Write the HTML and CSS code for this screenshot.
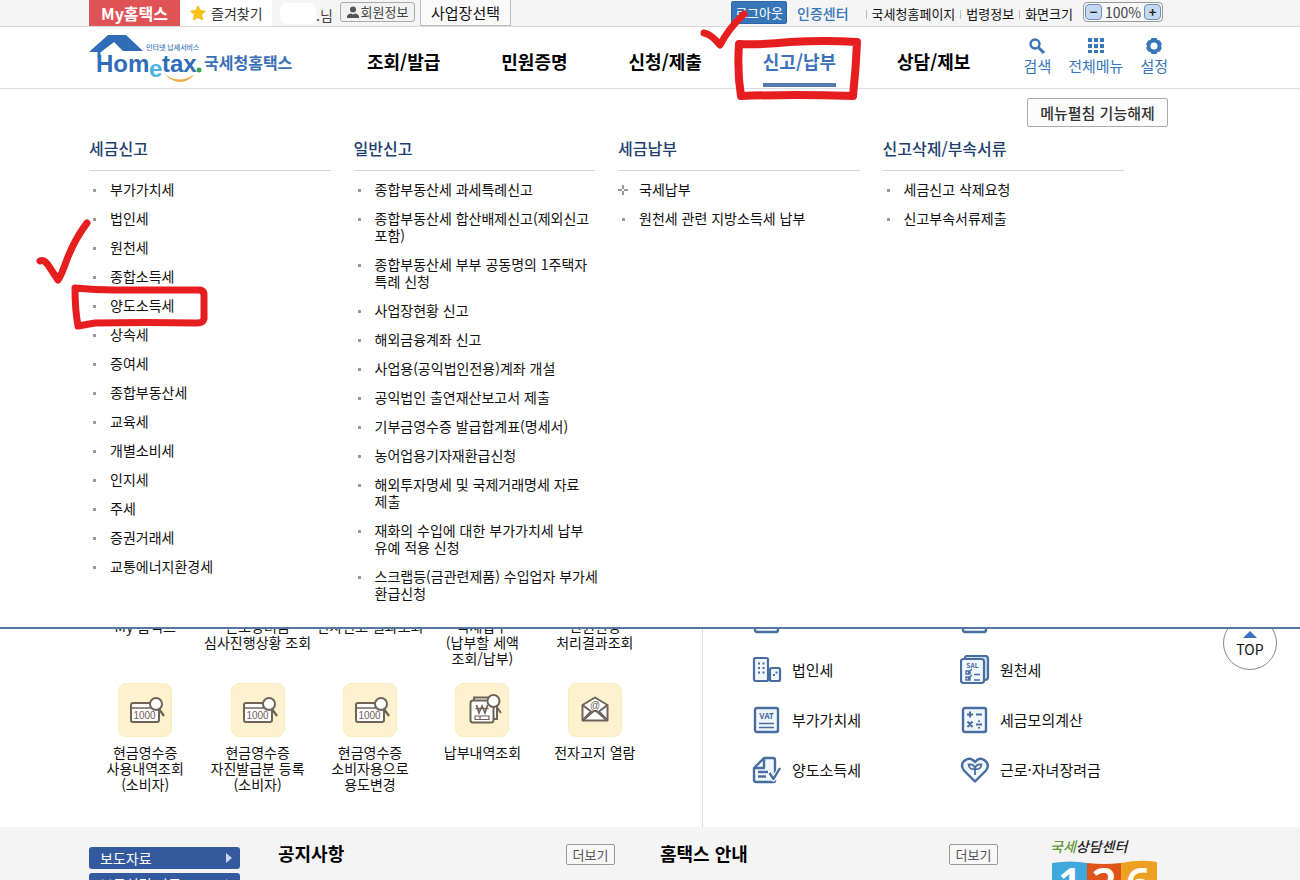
FILE: index.html
```html
<!DOCTYPE html>
<html lang="ko">
<head>
<meta charset="utf-8">
<title>국세청 홈택스</title>
<link rel="stylesheet" href="styles.css">
</head>
<body>
<svg class="defs" aria-hidden="true">
  <symbol id="receipt" viewBox="0 0 54 54">
    <rect x="13" y="20" width="28" height="19" rx="2" fill="#fff" stroke="#6f6259" stroke-width="2"/>
    <path d="M13 25H40" stroke="#6f6259" stroke-width="1.5"/>
    <text x="26.5" y="36" text-anchor="middle" class="icon-won">1000</text>
    <path d="M41 26L46 33" stroke="#6f6259" stroke-width="2.2"/>
    <circle cx="38" cy="21" r="6" fill="#fff" stroke="#6f6259" stroke-width="2"/>
  </symbol>
  <symbol id="doc" viewBox="0 0 30 30">
    <rect x="3" y="3" width="23" height="24" rx="2" fill="#f2f7fd" stroke="#486d9f" stroke-width="2.4"/>
    <path d="M7 18.5H22M7 22.5H22" stroke="#486d9f" stroke-width="1.6"/>
  </symbol>
</svg>
<div class="page">
  <div class="topbar">
    <div class="wrap topbar-row">
      <a href="#" class="my-tab">My홈택스</a>
      <a href="#" class="fav-tab"><svg width="16" height="16" viewBox="0 0 16 16"><path d="M8 1L10.2 5.6L15.3 6.2L11.5 9.7L12.5 14.8L8 12.3L3.5 14.8L4.5 9.7L.7 6.2L5.8 5.6Z" fill="#fcc419" stroke="#f5b40c"/></svg>즐겨찾기</a>
      <span class="user"><span class="user-name"></span>.님</span>
      <button class="info-btn"><svg width="12" height="12" viewBox="0 0 12 12"><circle cx="6" cy="3.5" r="3" fill="#555"/><path d="M0 12V10Q1 7.5 4 7.5L6 8.5L8 7.5Q11 7.5 12 10V12Z" fill="#555"/></svg>회원정보</button>
      <button class="biz-btn">사업장선택</button>
      <div class="top-right">
        <button class="logout">로그아웃</button>
        <a href="#" class="cert">인증센터</a>
        <div class="links"><a href="#">국세청홈페이지</a><a href="#">법령정보</a><span>화면크기</span></div>
        <div class="zoom"><button aria-label="축소">−</button><span>100%</span><button aria-label="확대">+</button></div>
      </div>
    </div>
  </div>

  <header class="header">
    <div class="wrap header-row">
      <a href="#" class="logo" aria-label="Hometax 국세청홈택스">
        <svg width="204" height="52" viewBox="0 0 204 52">
          <path d="M0 19L19 2H37L54 18H34L25 9L12 19Z" fill="#2f6db8"/>
          <path d="M10 17V24" stroke="#2f6db8" stroke-width="3"/>
          <text x="7" y="39" class="lg-main">Hom</text>
          <text x="60" y="44" class="lg-e">e</text>
          <text x="73" y="39" class="lg-main">tax</text>
          <circle cx="110" cy="37" r="2.5" fill="#39a548"/>
          <path d="M75 41Q91 52 106 41Q92 57 75 41Z" fill="#f0a83b"/>
          <text x="57" y="17" class="lg-small">인터넷 납세서비스</text>
          <text x="115" y="36" class="lg-kr">국세청홈택스</text>
        </svg>
      </a>
      <nav class="nav">
        <a href="#">조회/발급</a><a href="#">민원증명</a><a href="#">신청/제출</a><a href="#" class="active">신고/납부</a><a href="#">상담/제보</a>
      </nav>
      <div class="tools">
        <a href="#"><svg width="18" height="18" viewBox="0 0 18 18" fill="none" stroke="#3876bb"><circle cx="7" cy="7" r="4.5" stroke-width="2.4"/><path d="M10.5 10.5L16 16" stroke-width="3"/></svg>검색</a>
        <a href="#"><svg width="18" height="18" viewBox="0 0 18 18" fill="#3876bb"><path d="M1 1h4v4H1zM7 1h4v4H7zM13 1h4v4h-4zM1 7h4v4H1zM7 7h4v4H7zM13 7h4v4h-4zM1 13h4v3H1zM7 13h4v3H7zM13 13h4v3h-4z"/></svg>전체메뉴</a>
        <a href="#"><svg width="18" height="18" viewBox="0 0 18 18"><path d="M6.5 1h5l1 2 2.400.4 2 3.800-1 1.800 1 2-2 3.600-2.400.4-1 2h-5l-1-2-2.400-.4-2-3.600 1-2-1-1.800 2-3.800 2.400-.4z" fill="#3876bb"/><circle cx="9" cy="9" r="3.500" fill="#fff"/></svg>설정</a>
      </div>
    </div>
  </header>

  <div class="stage">
    <section class="mega">
      <div class="wrap">
        <div class="mega-top"><button class="toggle">메뉴펼침 기능해제</button></div>
        <div class="mega-cols">
          <div><h2>세금신고</h2>
            <ul><li><a href="#">부가가치세</a></li><li><a href="#">법인세</a></li><li><a href="#">원천세</a></li><li><a href="#">종합소득세</a></li><li><a href="#">양도소득세</a></li><li><a href="#">상속세</a></li><li><a href="#">증여세</a></li><li><a href="#">종합부동산세</a></li><li><a href="#">교육세</a></li><li><a href="#">개별소비세</a></li><li><a href="#">인지세</a></li><li><a href="#">주세</a></li><li><a href="#">증권거래세</a></li><li><a href="#">교통에너지환경세</a></li></ul></div>
          <div><h2>일반신고</h2>
            <ul><li><a href="#">종합부동산세 과세특례신고</a></li><li><a href="#">종합부동산세 합산배제신고(제외신고<br>포함)</a></li><li><a href="#">종합부동산세 부부 공동명의 1주택자<br>특례 신청</a></li><li><a href="#">사업장현황 신고</a></li><li><a href="#">해외금융계좌 신고</a></li><li><a href="#">사업용(공익법인전용)계좌 개설</a></li><li><a href="#">공익법인 출연재산보고서 제출</a></li><li><a href="#">기부금영수증 발급합계표(명세서)</a></li><li><a href="#">농어업용기자재환급신청</a></li><li><a href="#">해외투자명세 및 국제거래명세 자료<br>제출</a></li><li><a href="#">재화의 수입에 대한 부가가치세 납부<br>유예 적용 신청</a></li><li><a href="#">스크랩등(금관련제품) 수입업자 부가세<br>환급신청</a></li></ul></div>
          <div><h2>세금납부</h2>
            <ul><li class="plus"><a href="#">국세납부</a></li><li><a href="#">원천세 관련 지방소득세 납부</a></li></ul></div>
          <div><h2>신고삭제/부속서류</h2>
            <ul><li><a href="#">세금신고 삭제요청</a></li><li><a href="#">신고부속서류제출</a></li></ul></div>
        </div>
      </div>
    </section>

    <main class="wrap main">
      <div class="quick">
        <a href="#"><span class="tile"></span>My 홈택스</a>
        <a href="#"><span class="tile"></span>근로장려금<br>심사진행상황 조회</a>
        <a href="#"><span class="tile"></span>전자신고 결과조회</a>
        <a href="#"><span class="tile"></span>국세납부<br>(납부할 세액<br>조회/납부)</a>
        <a href="#"><span class="tile"></span>민원신청<br>처리결과조회</a>
        <a href="#"><span class="tile"><svg><use href="#receipt"/></svg></span>현금영수증<br>사용내역조회<br>(소비자)</a>
        <a href="#"><span class="tile"><svg><use href="#receipt"/></svg></span>현금영수증<br>자진발급분 등록<br>(소비자)</a>
        <a href="#"><span class="tile"><svg><use href="#receipt"/></svg></span>현금영수증<br>소비자용으로<br>용도변경</a>
        <a href="#"><span class="tile"><svg viewBox="0 0 54 54" fill="#fff" stroke="#6f6259" stroke-width="2"><path d="M19 17V14.5H38Q42 14.5 42 18V36H38"/><rect x="15.5" y="17.5" width="23" height="22" rx="2.5"/><path d="M21.500 22L24 30L27 23L30 30L32.500 22M20.500 25.500H33.500" fill="none" stroke-width="1.6"/><path d="M20 33H34V36.500H20ZM25 33V36.500" stroke-width="1.2"/><path d="M41 23L46 30"/><circle cx="38.5" cy="18" r="6"/></svg></span>납부내역조회</a>
        <a href="#"><span class="tile"><svg viewBox="0 0 54 54" fill="#fff" stroke="#6f6259" stroke-width="2" stroke-linejoin="round"><path d="M14.5 22L27 14.5L39.5 22V37.5H14.5Z"/><path d="M14.5 22L23 28.5L14.5 37.5M39.5 22L31 28.5L39.5 37.5M15 37.5L24.5 29Q27 27 29.5 29L39 37.5" fill="none"/><text x="27" y="26" text-anchor="middle" class="icon-won icon-at">@</text></svg></span>전자고지 열람</a>
      </div>
      <div class="taxes">
        <a href="#"><svg><use href="#doc"/></svg>종합소득세</a>
        <a href="#"><svg><use href="#doc"/></svg>연말정산</a>
        <a href="#"><svg viewBox="0 0 30 30" fill="#f2f7fd" stroke="#486d9f" stroke-width="2.2"><rect x="2" y="3" width="14" height="23" rx="1.5"/><rect x="18" y="13" width="10" height="13" rx="1.5"/><path d="M6 8.5H8M10.5 8.5H12.5M6 13H8M10.5 13H12.5M6 17.5H8M10.5 17.5H12.5M21 20H23M23.5 17.5H25.5"/></svg>법인세</a>
        <a href="#"><svg viewBox="0 0 30 30" fill="#f2f7fd" stroke="#486d9f" stroke-width="2.2"><path d="M5 4V3Q5 1 7 1H25Q28 1 28 4V22Q28 25 25 25" fill="#cfe0f5"/><rect x="1" y="4" width="23" height="24" rx="2.5"/><text x="12.5" y="13" text-anchor="middle" class="icon-sal">SAL</text><path d="M6 16H10V19H6ZM6 22H10V25H6ZM14 19.5H20M14 25H20M8 18L12 14M8 24L12 20" stroke-width="1.3" fill="none"/></svg>원천세</a>
        <a href="#"><svg viewBox="0 0 30 30"><use href="#doc"/><text x="14.5" y="14" text-anchor="middle" class="icon-vat">VAT</text></svg>부가가치세</a>
        <a href="#"><svg viewBox="0 0 30 30" fill="#f2f7fd" stroke="#486d9f" stroke-width="2.4"><rect x="3" y="3" width="23" height="24" rx="2"/><path d="M7 9.5H13M10 6.5V12.5M16 9.5H22M7.5 16.5L12.5 22M12.5 16.5L7.5 22M16 19.5H22M19 15.5V17M19 22V23.5" stroke-width="2"/></svg>세금모의계산</a>
        <a href="#"><svg viewBox="0 0 30 30" fill="#f2f7fd" stroke="#486d9f" stroke-width="2.4" stroke-linejoin="round"><path d="M12 3H21Q23 3 23 5V26Q23 27 22 27H4Q2 27 2 25V13Z"/><path d="M12 3V13H3M6 17H16M6 21.5H14" fill="none"/><path d="M17.5 19L21.5 24L28 14" fill="none" stroke="#fff" stroke-width="5"/><path d="M17.5 18L21.5 24L28 13" fill="none"/></svg>양도소득세</a>
        <a href="#"><svg viewBox="0 0 30 30" fill="#f2f7fd" stroke="#486d9f" stroke-width="2.4" stroke-linejoin="round"><path d="M15 26.5L4 15.5Q0 10 4 6Q10 1 15 7Q20 1 25.500 6Q30 10 26 15.5Z"/><path d="M15 20V14Q9 15 8.500 9.500Q14.500 9 15 14Q15.500 9 21.500 9.500Q21 15 15 14" fill="none" stroke-width="1.8"/></svg>근로·자녀장려금</a>
      </div>
    </main>
    <a href="#" class="to-top"><svg width="14" height="8" viewBox="0 0 14 8"><path d="M7 0L14 7H0Z" fill="#3b6fc4"/></svg>TOP</a>
  </div>

  <footer class="bottom">
    <div class="wrap bottom-row">
      <div class="press"><a href="#">보도자료<i></i></a><a href="#">보도설명 자료<i></i></a></div>
      <div class="board notice"><h2>공지사항</h2><button>더보기</button></div>
      <div class="board guide"><h2>홈택스 안내</h2><button>더보기</button></div>
      <a href="#" class="call" aria-label="국세상담센터 126">
        <svg width="110" height="70" viewBox="0 0 110 70">
          <text x="0" y="17" class="call-name"><tspan fill="#5f9a35">국세</tspan><tspan fill="#222">상담센터</tspan></text>
          <path d="M2 28Q20 25 37 28V70H2Z" fill="#41a8dc"/><path d="M37 28Q54 30 71 28V70H37Z" fill="#df5518"/><path d="M71 28Q90 24 107 27V70H71Z" fill="#eda022"/>
          <text x="20" y="64" class="call-num">1</text><text x="54" y="64" class="call-num">2</text><text x="88" y="64" class="call-num">6</text>
        </svg>
      </a>
    </div>
  </footer>

  <svg class="marks" width="1300" height="880" viewBox="0 0 1300 880" aria-hidden="true">
    <path d="M704 33Q711 34 720 45Q729 28 744 14" stroke-width="7"/>
    <path d="M739 44Q760 45 790 42Q825 40 857 42Q856 68 853 96Q795 94 741 96Q737 72 739 44Z" stroke-width="8"/>
    <path d="M40 261Q45 259 50 268L58 280Q61 276 66 262Q74 240 87 223" stroke-width="7"/>
    <path d="M75 288Q95 290 115 290H200Q205 291 204 297V319Q203 323 197 323Q145 322 95 323L78 326Q75 310 75 288Z" stroke-width="7"/>
  </svg>
</div>
</body>
</html>
```
FILE: styles.css
```css
* { box-sizing: border-box; }
body {
  margin: 0;
  background: #fff;
  color: #111;
  font-family: "Noto Sans CJK KR", "Noto Sans", sans-serif;
  font-size: 14px;
  white-space: nowrap;
}
a { color: inherit; text-decoration: none; }
button { font-family: inherit; color: inherit; padding: 0; margin: 0; cursor: pointer; }
h2, ul { margin: 0; padding: 0; }
svg { display: block; flex: none; }
.defs { position: absolute; width: 0; height: 0; }
.page { position: relative; height: 100vh; overflow: hidden; }
.wrap { margin: 0 132px 0 89px; }

.topbar { background: #f5f5f5; border-bottom: 1px solid #d9d9d9; }
.topbar-row { display: flex; align-items: flex-start; height: 26px; line-height: 26px; }
.my-tab { width: 91px; height: 26px; background: #df5356; color: #fff; font-size: 16px; font-weight: 700; text-align: center; }
.fav-tab { display: flex; align-items: center; gap: 5px; width: 92px; height: 26px; padding-left: 10px; background: #fff; color: #333; }
.user { display: flex; width: 60px; margin-left: 8px; line-height: 30px; color: #444; }
.user-name { width: 36px; height: 21px; margin-top: 3px; border-radius: 7px; background: #fff; }
.info-btn { display: flex; align-items: center; justify-content: center; gap: 2px; width: 75px; height: 20px; margin-top: 2px; border: 1px solid #aaa; border-radius: 3px; background: #f3f3f3; color: #444; font-size: 13px; line-height: 18px; }
.biz-btn { width: 91px; height: 26px; margin-left: 5px; border: 1px solid #bbb; border-top: 0; background: #fafafa; font-size: 15px; line-height: 24px; }
.top-right { display: flex; align-items: flex-start; margin-left: auto; margin-right: 5px; font-size: 13px; }
.logout { width: 56px; height: 23px; margin-top: 1px; border: 1px solid #2c68a8; border-radius: 2px; background: #3777b9; color: #fff; font-size: 13px; line-height: 21px; }
.cert { margin-left: 10px; color: #3876bb; font-size: 14px; font-weight: 500; }
.links { display: flex; gap: 11px; margin-left: 23px; line-height: 28px; }
.links > * { position: relative; }
.links > *::before { content: ""; position: absolute; left: -6px; top: 10px; height: 9px; border-left: 1px solid #bbb; }
.zoom { display: flex; align-items: center; justify-content: space-between; width: 80px; height: 20px; margin: 2px 0 0 10px; padding: 0 1px; border: 1px solid #999; border-radius: 4px; background: #f8f8f8; font-size: 14px; line-height: 18px; color: #444; }
.zoom button { width: 17px; height: 16px; border: 1px solid #6f8fb8; border-radius: 4px; background: #c5d9f1; font-size: 13px; font-weight: 700; line-height: 12px; color: #222; }

.header { border-bottom: 1px solid #ddd; }
.header-row { display: flex; height: 61px; }
.logo { width: 278px; padding-top: 6px; }
.lg-main { font: 700 24px "Liberation Sans", sans-serif; fill: #2f6db8; }
.lg-e { font: 700 24px "Liberation Sans", sans-serif; fill: #4bb3e6; }
.lg-small { font-size: 7px; font-weight: 500; fill: #3a78bd; }
.lg-kr { font-size: 16px; font-weight: 700; fill: #3a70b5; }
.nav { display: flex; gap: 61px; }
.nav a { height: 60px; padding-top: 20px; color: #000; font-size: 18px; font-weight: 700; line-height: 28px; }
.nav .active { color: #3d72b8; }
.nav .active::after { content: ""; display: block; height: 4px; margin-top: 8px; background: #5679b2; }
.tools { display: flex; gap: 17px; margin-left: auto; color: #3876bb; font-size: 15px; line-height: 22px; }
.tools a { display: flex; flex-direction: column; align-items: center; padding-top: 10px; }

.stage { position: relative; }
.mega { position: absolute; z-index: 2; top: 0; left: 0; right: 0; height: 540px; background: #fff; border-bottom: 2px solid #56779f; }
.mega-top { display: flex; justify-content: flex-end; padding-top: 9px; }
.toggle { width: 141px; height: 29px; border: 1px solid #aaa; border-radius: 2px; background: #fcfcfc; color: #333; font-size: 15px; font-weight: 500; line-height: 26px; }
.mega-cols { display: grid; grid-template-columns: repeat(4, minmax(0, 1fr)); gap: 23px; margin: 9px 44px 0 0; }
.mega h2 { height: 35px; margin-bottom: 10px; border-bottom: 1px solid #d5d5d5; color: #20406f; font-size: 16px; font-weight: 500; line-height: 24px; }
.mega ul { display: grid; gap: 12px; list-style: none; line-height: 17px; }
.mega li { position: relative; padding-left: 21px; }
.mega li::before { content: ""; position: absolute; left: 4px; top: 8px; width: 3px; height: 3px; background: #999; }
.mega .plus::before { left: 0; top: 4px; width: 10px; height: 10px; background: linear-gradient(#999, #999) 4px 0 / 2px 10px no-repeat, linear-gradient(#999, #999) 0 4px / 10px 2px no-repeat; }
.mega .plus::after { content: ""; position: absolute; left: 4px; top: 8px; width: 2px; height: 2px; background: #fff; }

.main { display: grid; grid-template-columns: 614px 1fr; height: 738px; }
.quick { display: grid; grid-template-columns: repeat(5, 1fr); grid-auto-rows: 126px; padding: 468px 51px 0 0; border-right: 1px solid #ddd; }
.quick a { display: flex; flex-direction: column; align-items: center; line-height: 16px; text-align: center; }
.tile { width: 54px; height: 54px; margin-bottom: 7px; border: 1px solid #f8edc2; border-radius: 8px; background: #fcf2cd; }
.tile svg { width: 54px; height: 54px; margin: -1px; }
.icon-won { font: 10px "Liberation Sans", sans-serif; fill: #6f6259; }
.icon-at { stroke: none; }
.taxes { display: grid; grid-template-columns: 208px 1fr; grid-auto-rows: 50px; padding: 506px 0 0 49px; font-size: 15px; line-height: 20px; }
.taxes a { display: flex; align-items: center; gap: 10px; }
.taxes svg { width: 30px; height: 30px; }
.icon-sal { font: 700 7px "DejaVu Sans Mono", monospace; fill: #486d9f; stroke: none; }
.icon-vat { font: 700 8px "Noto Sans", sans-serif; fill: #486d9f; }
.to-top { position: absolute; right: 23px; top: 527px; display: flex; flex-direction: column; align-items: center; width: 54px; height: 54px; padding-top: 14px; border: 1px solid #888; border-radius: 50%; background: #fff; font-size: 14px; line-height: 20px; }

.bottom { background: #f4f4f4; }
.bottom-row { display: flex; align-items: flex-start; height: 100px; }
.press { display: grid; gap: 4px; width: 151px; margin-top: 20px; }
.press a { display: flex; align-items: center; justify-content: space-between; height: 22px; padding: 0 8px 0 11px; border-radius: 3px; background: #335a9e; color: #fff; line-height: 20px; }
.press i { border: 5px solid transparent; border-left: 6px solid #ccd6e6; border-right: 0; }
.board { display: flex; align-items: flex-start; justify-content: space-between; margin-top: 14px; }
.board h2 { color: #000; font-size: 18px; font-weight: 700; line-height: 24px; }
.board button { width: 49px; height: 21px; margin-top: 3px; border: 1px solid #999; border-radius: 2px; background: #f8f8f8; color: #555; font-size: 13px; line-height: 19px; }
.notice { width: 337px; margin-left: 38px; }
.guide { width: 338px; margin-left: 45px; }
.call { margin: 8px 0 0 52px; }
.call-name { font-size: 14px; font-weight: 500; font-style: italic; }
.call-num { font: 600 44px "Noto Sans", sans-serif; fill: #fff; text-anchor: middle; }

.marks { position: absolute; z-index: 5; top: 0; left: 0; pointer-events: none; fill: none; stroke: #e61e20; stroke-linecap: round; stroke-linejoin: round; }
```
